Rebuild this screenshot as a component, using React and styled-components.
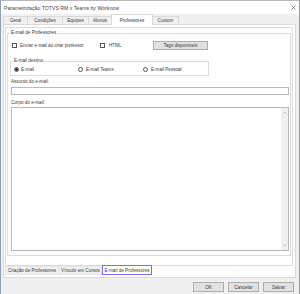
import React from 'react';
import styled, { createGlobalStyle } from 'styled-components';

const Global = createGlobalStyle`
  html, body { margin: 0; padding: 0; background: #fff; }
  body { font-family: "Liberation Sans", Arial, sans-serif; }
  * { box-sizing: border-box; }
`;

// window chrome
const Window = styled.div`
  width: 300px;
  height: 294px;
  background: #f0f0f0;
  border-top: 1px solid #b8b8b8;
  border-left: 1px solid #8da2ba;
  border-right: 1px solid #9a9a9a;
  display: flex;
  flex-direction: column;
  overflow: hidden;
  color: #3a3a3a;
  font-size: 4.6px;
`;

const TitleBar = styled.div`
  height: 13px;
  background: #fff;
  display: flex;
  align-items: center;
  justify-content: space-between;
  padding: 0 3px 0 3px;
  font-size: 5.2px;
  color: #444;
`;

const TabStrip = styled.div`
  height: 10px;
  display: flex;
  align-items: flex-end;
  padding-left: 2px;
`;

const Tab = styled.div`
  position: relative;
  z-index: ${p => (p.$active ? 2 : 1)};
  width: ${p => p.$w}px;
  height: ${p => (p.$active ? 11 : 8)}px;
  margin-bottom: ${p => (p.$active ? -1 : 0)}px;
  margin-left: ${p => (p.$first ? 0 : -1)}px;
  background: ${p => (p.$active ? '#fff' : '#f0f0f0')};
  border: 1px solid #d9d9d9;
  border-bottom: none;
  display: flex;
  align-items: center;
  justify-content: center;
  white-space: nowrap;
`;

const Page = styled.div`
  height: 254px;
  margin: 0 3px 0 2px;
  background: #fff;
  border: 1px solid #d9d9d9;
  padding: 2px 2px 1px 1px;
  display: flex;
  flex-direction: column;
`;

const InnerPage = styled.div`
  height: 239px;
  border: 1px solid #dcdcdc;
  padding: 0 1px;
`;

const GroupBox = styled.fieldset`
  margin: 2px 0 0 0;
  padding: 5px 1px 4px 3px;
  border: 1px solid #dcdcdc;
  min-width: 0;
  width: 284px;
`;

const Legend = styled.legend`
  font-size: 4.6px;
  line-height: 6px;
  padding: 0 1px;
  margin-left: -1px;
`;

const CheckRow = styled.div`
  height: 9px;
  display: flex;
  align-items: center;
  padding-left: 1px;
`;

const Item = styled.div`
  width: ${p => p.$w}px;
  display: flex;
  align-items: center;
  gap: ${p => p.$gap || 3}px;
  white-space: nowrap;
`;

const Check = styled.span`
  width: 5px;
  height: 5px;
  border: 1px solid #555;
  background: #fff;
  flex: none;
`;

const Radio = styled.span`
  width: 5px;
  height: 5px;
  border-radius: 50%;
  border: 1px solid #555;
  flex: none;
  background: ${p => (p.$on ? 'radial-gradient(circle, #333 0 1.1px, #fff 1.5px)' : '#fff')};
`;

const Button = styled.div`
  width: ${p => p.$w}px;
  height: ${p => p.$h || 9}px;
  background: #e1e1e1;
  border: 1px solid #adadad;
  display: flex;
  align-items: center;
  justify-content: center;
  white-space: nowrap;
`;

const DestinoBox = styled.fieldset`
  margin: 8px 0 0 -1px;
  width: 199px;
  padding: 2px 0 3px 3px;
  border: 1px solid #dcdcdc;
  min-width: 0;
`;

const RadioRow = styled.div`
  height: 6px;
  display: flex;
  align-items: center;
`;

const FieldLabel = styled.div`
  line-height: 6px;
  margin-top: ${p => p.$mt}px;
`;

const TextInput = styled.div`
  width: 278px;
  height: 8px;
  margin-top: 2px;
  border: 1px solid #b9b9b9;
  background: #fff;
`;

const BodyBox = styled.div`
  width: 278px;
  height: 144px;
  margin-top: 1px;
  border: 1px solid #b9b9b9;
  background: #fff;
  display: flex;
  justify-content: flex-end;
`;

const ScrollBar = styled.div`
  width: 7px;
  background: #f0f0f0;
  display: flex;
  flex-direction: column;
  align-items: center;
  justify-content: space-between;
  padding: 3px 0;
`;

const BottomTabs = styled.div`
  height: 10px;
  display: flex;
  align-items: flex-start;
`;

const BottomTab = styled.div`
  width: ${p => p.$w}px;
  height: ${p => (p.$active ? 10 : 9)}px;
  margin-top: ${p => (p.$active ? -1 : 0)}px;
  background: ${p => (p.$active ? '#fff' : '#f0f0f0')};
  border: 1px solid ${p => (p.$active ? '#7b6cf6' : '#e6e6e6')};
  display: flex;
  align-items: center;
  justify-content: center;
  white-space: nowrap;
`;

const Footer = styled.div`
  display: flex;
  justify-content: flex-end;
  gap: 4px;
  padding: 4px 5px 0 0;
`;

const Chevron = ({ up }) => (
  <svg width="4" height="3" viewBox="0 0 4 3">
    <path d={up ? 'M0.5 2.5 L2 1 L3.5 2.5' : 'M0.5 0.5 L2 2 L3.5 0.5'} stroke="#b0b0b0" strokeWidth="0.7" fill="none" />
  </svg>
);

const tabs = [
  ['Geral', 25],
  ['Condições', 36],
  ['Equipes', 27],
  ['Alunos', 24],
  ['Professores', 42, true],
  ['Custom', 27],
];

const bottomTabs = [
  ['Criação de Professores', 54],
  ['Vínculo em Cursos', 43],
  ['E-mail de Professores', 50, true],
];

export default function App() {
  return (
    <>
      <Global />
      <Window>
        <TitleBar>
          <span>Parametrização TOTVS RM x Teams by Worknow</span>
          <svg width="5" height="5" viewBox="0 0 5 5">
            <path d="M0.5 0.5 L4.5 4.5 M4.5 0.5 L0.5 4.5" stroke="#666" strokeWidth="0.7" />
          </svg>
        </TitleBar>
        <TabStrip>
          {tabs.map(([label, w, active], i) => (
            <Tab key={label} $w={w} $active={active} $first={i === 0}>{label}</Tab>
          ))}
        </TabStrip>
        <Page>
          <InnerPage>
            <GroupBox>
              <Legend>E-mail de Professores</Legend>
              <CheckRow>
                <Item $w={88}><Check />Enviar e-mail ao criar professor</Item>
                <Item $w={53} $gap={4}><Check />HTML</Item>
                <Button $w={55}>Tags disponíveis</Button>
              </CheckRow>
              <DestinoBox>
                <Legend>E-mail destino</Legend>
                <RadioRow>
                  <Item $w={64} $gap={2}><Radio $on />E-mail</Item>
                  <Item $w={65}><Radio />E-mail Teams</Item>
                  <Item $w={60}><Radio />E-mail Pessoal</Item>
                </RadioRow>
              </DestinoBox>
              <FieldLabel $mt={3}>Assunto do e-mail:</FieldLabel>
              <TextInput />
              <FieldLabel $mt={5}>Corpo do e-mail:</FieldLabel>
              <BodyBox>
                <ScrollBar>
                  <Chevron up />
                  <Chevron />
                </ScrollBar>
              </BodyBox>
            </GroupBox>
          </InnerPage>
          <BottomTabs>
            {bottomTabs.map(([label, w, active]) => (
              <BottomTab key={label} $w={w} $active={active}>{label}</BottomTab>
            ))}
          </BottomTabs>
        </Page>
        <Footer>
          <Button $w={31} $h={10}>OK</Button>
          <Button $w={31} $h={10}>Cancelar</Button>
          <Button $w={31} $h={10}>Salvar</Button>
        </Footer>
      </Window>
    </>
  );
}
